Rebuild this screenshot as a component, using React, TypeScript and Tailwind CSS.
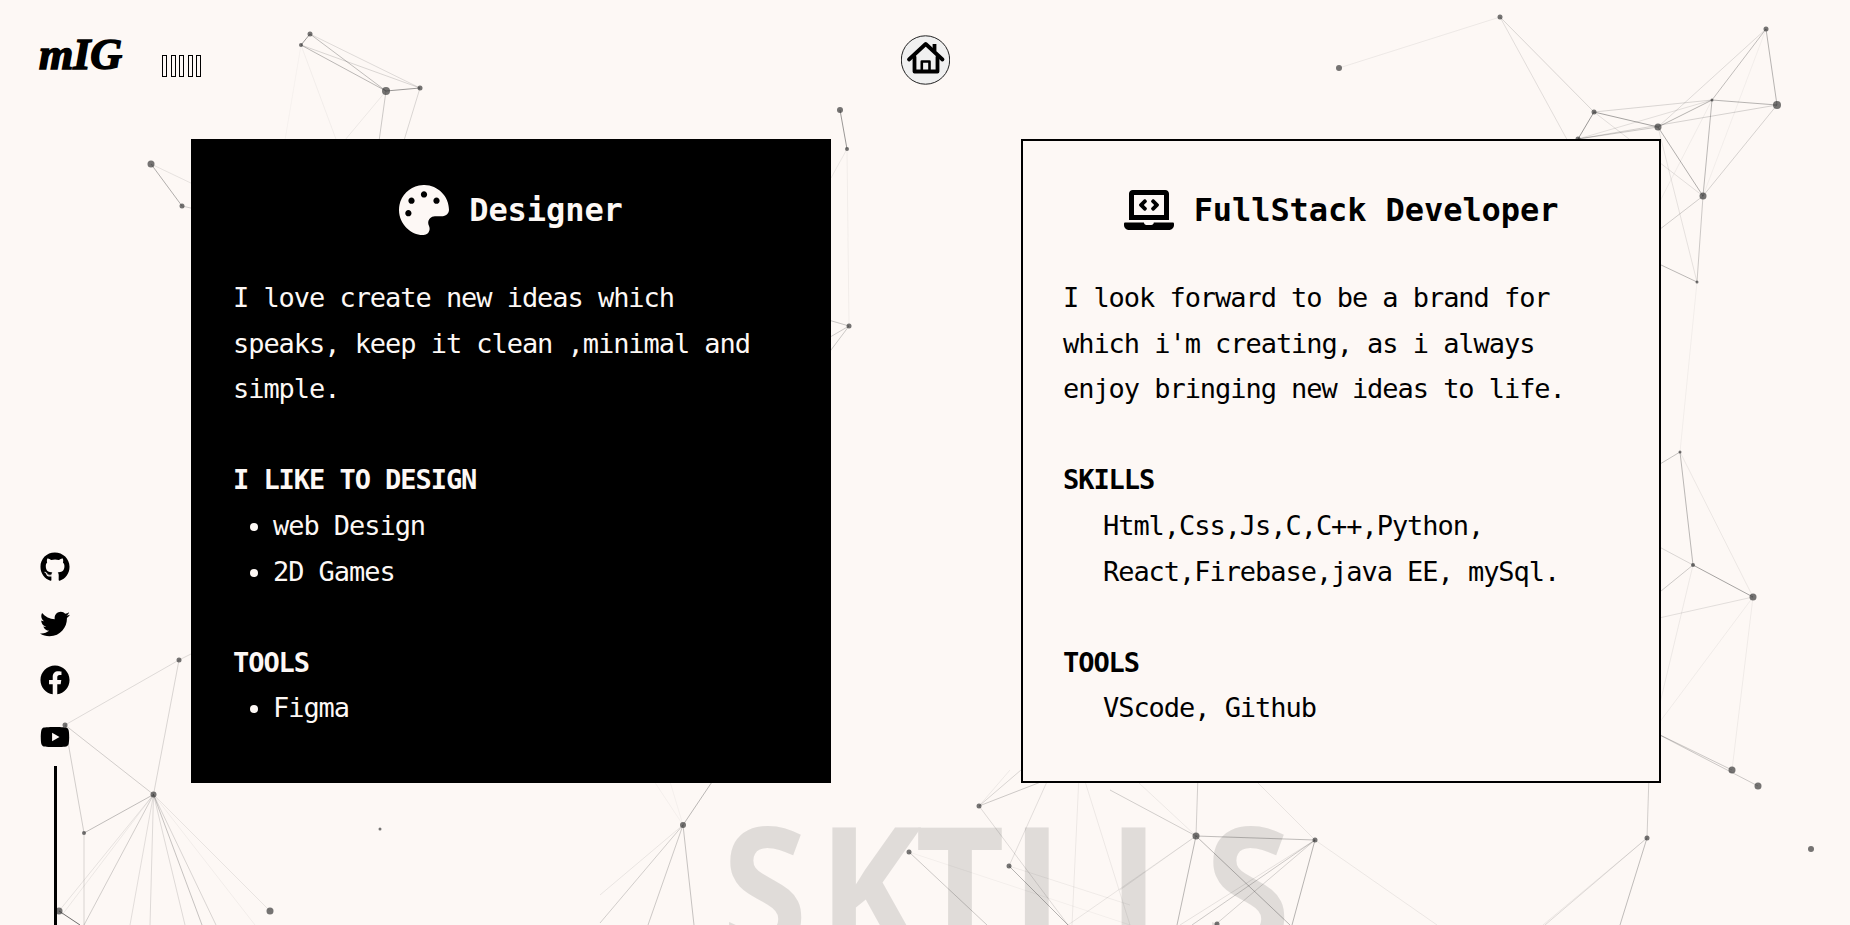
import React from "react";
import { FaGithub, FaTwitter, FaFacebook, FaYoutube, FaPalette, FaLaptopCode } from "react-icons/fa";

const nodes: [number, number, number][] = [
  [310,34,2.5],[301,45,2],[386,91,4],[420,88,2.5],[151,164,3.5],[182,206,2.5],
  [840,110,3],[847,149,2],[849,326,2.5],
  [1500,17,2.5],[1339,68,3],[1766,29,2.5],[1777,105,4],[1712,100,1.5],[1658,127,3.5],[1594,112,2.5],[1578,139,2.5],[1703,196,3.5],[1697,282,1.5],
  [1680,452,1.5],[1693,565,2],[1753,597,3.5],[1732,770,3.5],[1758,786,3.5],[1811,849,3],[1647,838,2.5],
  [1196,836,3.5],[1315,840,2.5],[1217,924,2.5],
  [683,825,3],[979,806,2.5],[909,852,2.5],[1009,866,2.5],
  [153.5,794.5,3],[84,833,2],[59,911,3.5],[270,911,3.5],[380,829,1.5],[179,660,2.5],[65,725,2.5],
];

const lines: [number, number, number, number, number][] = [
  [310,34,301,45,.45],[310,34,386,91,.28],[310,34,420,88,.14],[301,45,386,91,.3],[301,45,420,88,.16],[386,91,420,88,.45],[386,91,375,170,.22],[420,88,395,170,.16],[301,45,285,140,.03],[301,45,340,150,.05],[386,91,345,140,.07],
  [151,164,182,206,.35],[151,164,195,185,.1],[182,206,195,209,.2],
  [840,110,847,149,.45],[847,149,831,178,.08],[847,149,849,326,.05],[849,326,825,319,.25],[849,326,825,340,.22],[849,326,825,358,.22],
  [1500,17,1339,68,.07],[1500,17,1594,112,.16],[1500,17,1570,145,.12],[1594,112,1578,139,.45],[1594,112,1658,127,.4],[1594,112,1712,100,.16],[1578,139,1658,127,.22],[1578,139,1712,100,.12],[1578,139,1777,105,.18],[1658,127,1712,100,.32],[1712,100,1777,105,.32],[1658,127,1766,29,.14],[1712,100,1766,29,.28],[1766,29,1777,105,.32],[1777,105,1703,196,.18],[1712,100,1703,196,.3],[1658,127,1703,196,.35],[1703,196,1697,282,.22],[1658,127,1697,282,.1],[1766,29,1703,196,.05],[1703,196,1620,260,.2],[1594,112,1703,196,.12],[1697,282,1640,255,.3],[1712,100,1640,240,.06],
  [1697,282,1680,452,.05],[1680,452,1650,470,.25],[1680,452,1693,565,.3],[1680,452,1753,597,.08],[1693,565,1753,597,.4],[1693,565,1650,542,.16],[1693,565,1650,600,.22],[1753,597,1650,620,.12],[1753,597,1650,735,.06],[1693,565,1650,745,.07],[1753,597,1732,770,.06],[1650,730,1758,786,.22],[1650,730,1732,770,.22],
  [1647,838,1649,775,.2],[1647,838,1545,925,.14],[1647,838,1543,925,.08],[1647,838,1620,925,.28],
  [1196,836,1315,840,.28],[1196,836,1198,775,.2],[1196,836,1110,790,.2],[1196,836,1125,770,.07],[1196,836,1120,890,.09],[1196,836,1177,925,.3],[1196,836,1290,925,.3],[1315,840,1250,775,.09],[1315,840,1192,925,.22],[1315,840,1180,925,.1],[1315,840,1215,925,.18],[1315,840,1292,925,.32],[1315,840,1437,925,.08],
  [683,825,720,770,.3],[683,825,600,895,.09],[683,825,600,923,.2],[683,825,648,925,.22],[683,825,694,925,.25],[683,825,650,775,.04],[683,825,668,775,.04],
  [979,806,1046,780,.22],[979,806,1021,770,.16],[979,806,1010,770,.07],[979,806,1068,925,.14],[1009,866,1068,925,.32],[909,852,987,925,.22],[909,852,1130,925,.04],[1009,866,1050,775,.12],[1072,925,1079,775,.07],[1083,775,1130,925,.07],[1068,925,1196,836,.09],[1009,866,1130,905,.06],
  [65,725,179,660,.14],[179,660,153.5,794.5,.16],[179,660,195,652,.14],[65,725,153.5,794.5,.2],[65,725,84,833,.2],[84,833,153.5,794.5,.28],[84,833,84,925,.16],
  [153.5,794.5,270,911,.09],[153.5,794.5,255,925,.05],[153.5,794.5,216,925,.16],[153.5,794.5,202,925,.25],[153.5,794.5,185,925,.14],[153.5,794.5,150,925,.14],[153.5,794.5,130,925,.12],[153.5,794.5,84,925,.2],[153.5,794.5,59,911,.1],[153.5,794.5,62,915,.08],[59,911,80,925,.65],
];

function Network() {
  return (
    <svg className="absolute inset-0 h-full w-full" viewBox="0 0 1850 925" aria-hidden="true">
      {lines.map(([a, b, c, d, o], i) => (
        <line key={i} x1={a} y1={b} x2={c} y2={d} stroke="#222" strokeOpacity={o} strokeWidth={1} />
      ))}
      {nodes.map(([x, y, r], i) => (
        <circle key={i} cx={x} cy={y} r={r} fill="#333" fillOpacity={0.68} />
      ))}
    </svg>
  );
}

function HomeIcon() {
  return (
    <svg viewBox="0 0 49 50" className="h-[50px] w-[49px]" aria-hidden="true">
      <circle cx="24.5" cy="25" r="24.2" fill="#f0f0f0" stroke="#222" strokeWidth="1" />
      <g fill="none" stroke="#000" strokeWidth="3.8" strokeLinejoin="round" strokeLinecap="round">
        <path d="M8 24.5 24.7 9 41.5 24.5" />
        <path d="M13.5 22V36.5H36.5V22" />
        <path d="M20.8 36V26.5H28.5V36" strokeWidth="2.6" strokeLinecap="butt" />
        <path d="M33.5 9V16" strokeLinecap="butt" />
      </g>
    </svg>
  );
}

const word = ["S", "K", "T", "L", "L", "S"];

export default function App() {
  return (
    <div className="relative flex h-screen w-full flex-col overflow-hidden bg-[#fdf8f5] text-black font-['DejaVu_Sans_Mono',monospace]">
      <div className="absolute left-[722px] top-[777px] flex origin-[0_52px] scale-y-[1.12] text-[155px] font-bold leading-[204px] text-[#e0dcd9] font-['Noto_Sans',sans-serif]">
        {word.map((l, i) => (
          <span key={i} className="w-[96.6px]">{l}</span>
        ))}
      </div>
      <Network />

      <header className="relative flex h-[139px] shrink-0">
        <div className="ml-[39px] mt-[27px] h-[56px] w-[84px] font-['Liberation_Serif',serif] text-[44px] font-bold italic leading-[56px] [-webkit-text-stroke:1.6px_#000]">
          mIG
        </div>
        <div className="ml-[39px] mt-[55px] flex h-[22px] gap-[3.6px]">
          <span className="w-[5px] border border-black" />
          <span className="w-[5px] border border-black" />
          <span className="w-[5px] border border-black" />
          <span className="w-[5px] border border-black" />
          <span className="w-[5px] border border-black" />
        </div>
        <div className="ml-[700px] mt-[35px]">
          <HomeIcon />
        </div>
      </header>

      <div className="relative flex min-h-0 flex-1">
        <aside className="flex w-[191px] shrink-0 flex-col pl-[40px] pt-[413px]">
          <FaGithub size={30} />
          <FaTwitter size={30} className="mt-[26.5px]" />
          <FaFacebook size={30} className="mt-[26.5px]" />
          <FaYoutube size={30} className="mt-[26.5px]" />
          <div className="ml-[14px] mt-[14px] w-[3px] flex-1 bg-black" />
        </aside>

        <main className="flex items-start gap-[190px]">
          <section className="h-[644px] w-[640px] bg-black px-[42px] pt-[42px] text-[#fdf8f5]">
            <h2 className="flex h-[58px] items-center justify-center gap-[20px] text-[32px] font-bold tracking-[-0.07px]">
              <FaPalette size={50} />
              <span>Designer</span>
            </h2>
            <div className="mt-[36px] text-[27px] leading-[45.6px] tracking-[-1.05px]">
              <p>I love create new ideas which speaks, keep it clean ,minimal and simple.</p>
              <h3 className="mt-[45.6px] font-bold">I LIKE TO DESIGN</h3>
              <ul className="list-disc pl-[40px]">
                <li>web Design</li>
                <li>2D Games</li>
              </ul>
              <h3 className="mt-[45.6px] font-bold">TOOLS</h3>
              <ul className="list-disc pl-[40px]">
                <li>Figma</li>
              </ul>
            </div>
          </section>

          <section className="h-[644px] w-[640px] border-2 border-black bg-[#fdf8f5] px-[40px] pt-[40px]">
            <h2 className="flex h-[58px] items-center justify-center gap-[20px] text-[32px] font-bold tracking-[-0.07px]">
              <FaLaptopCode size={50} />
              <span>FullStack Developer</span>
            </h2>
            <div className="mt-[36px] text-[27px] leading-[45.6px] tracking-[-1.05px]">
              <p>I look forward to be a brand for which i'm creating, as i always enjoy bringing new ideas to life.</p>
              <h3 className="mt-[45.6px] font-bold">SKILLS</h3>
              <p className="pl-[40px]">Html,Css,Js,C,C++,Python,</p>
              <p className="pl-[40px]">React,Firebase,java EE, mySql.</p>
              <h3 className="mt-[45.6px] font-bold">TOOLS</h3>
              <p className="pl-[40px]">VScode, Github</p>
            </div>
          </section>
        </main>
      </div>
    </div>
  );
}
